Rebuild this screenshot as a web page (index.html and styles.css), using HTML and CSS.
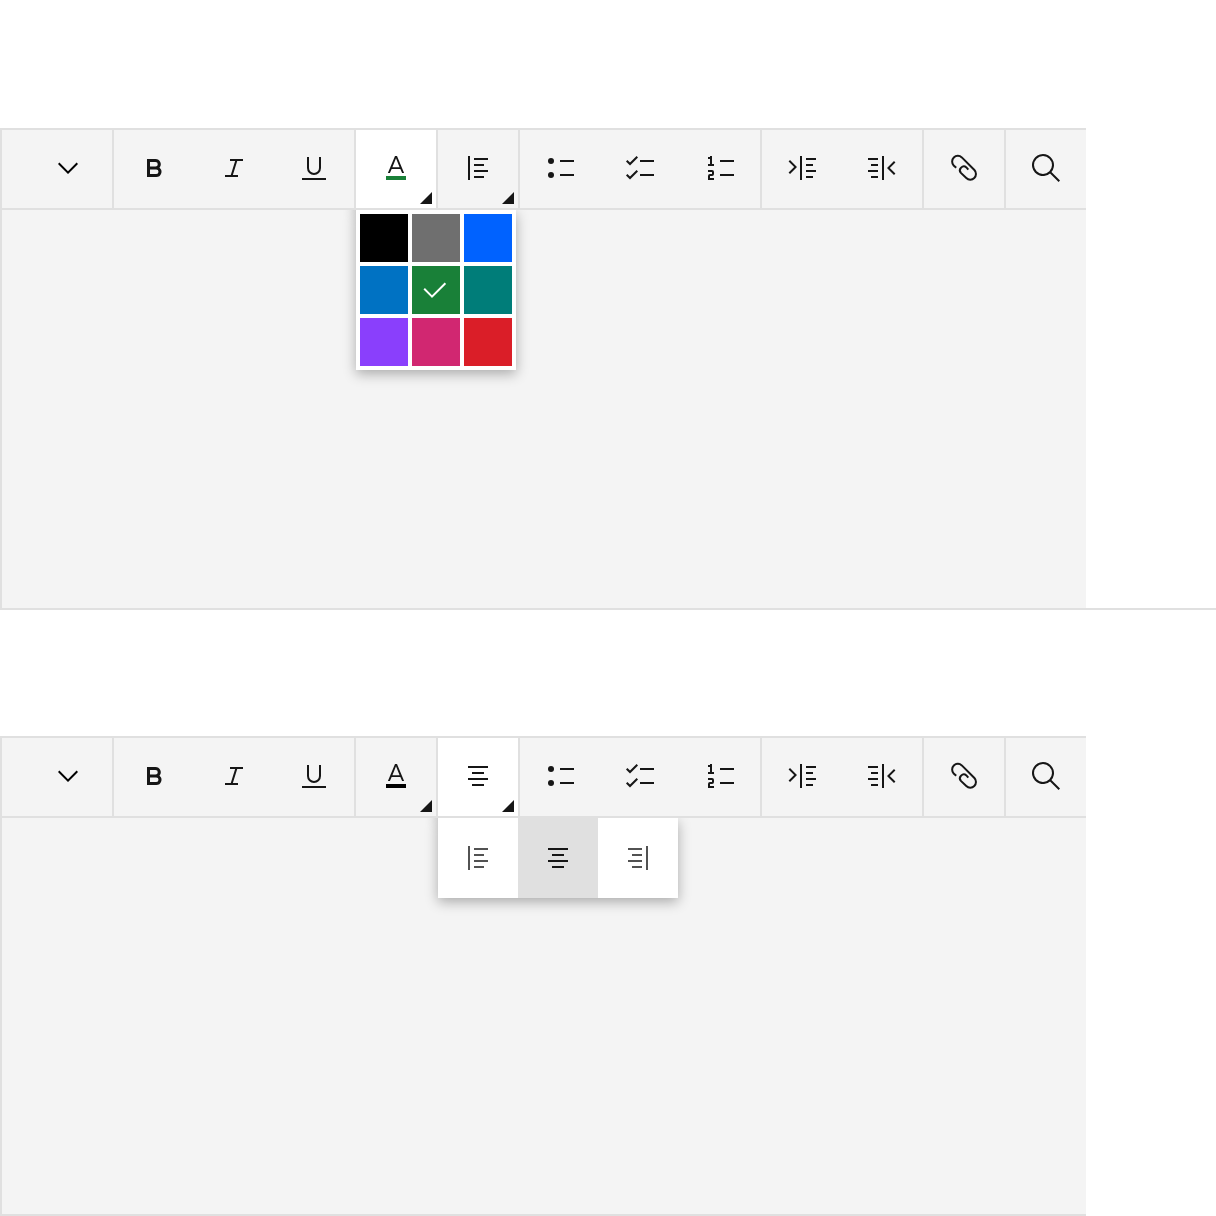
FILE: index.html
```html
<!DOCTYPE html>
<html lang="en">
<head>
<meta charset="utf-8">
<title>Text toolbar</title>
<link rel="stylesheet" href="styles.css">
</head>
<body>
<svg class="defs" aria-hidden="true">
  <symbol id="chevron" viewBox="0 0 32 32"><path d="M16 22 6 12l1.4-1.4 8.6 8.6 8.6-8.6L26 12z"/></symbol>
  <symbol id="bold" viewBox="0 0 32 32"><path d="M18.25 25H9V7h8.5a5.25 5.25 0 0 1 4 8.65A5.25 5.25 0 0 1 18.25 25zM12 22h6.23a2.25 2.25 0 1 0 0-4.5H12zm0-7.5h5.5a2.25 2.25 0 1 0 0-4.5H12z"/></symbol>
  <symbol id="italic" viewBox="0 0 32 32"><path d="M25 9V7H12v2h5.14l-4.37 14H7v2h13v-2h-5.14l4.37-14z"/></symbol>
  <symbol id="underline" viewBox="0 0 32 32"><path d="M4 26h24v2H4zM16 23a7 7 0 0 1-7-7V5h2v11a5 5 0 0 0 10 0V5h2v11a7 7 0 0 1-7 7z"/></symbol>
  <symbol id="letter" viewBox="0 0 32 32"><path d="M22.1 21h2L17 4h-2L7.9 21h2l1.75-4.1h8.7zM12.4 15.2 16 6.3l3.6 8.9z"/></symbol>
  <symbol id="left" viewBox="0 0 32 32"><path d="M6 4h2v24H6zM12 6h14v2H12zM12 12h10v2H12zM12 18h14v2H12zM12 24h10v2H12z"/></symbol>
  <symbol id="center" viewBox="0 0 32 32"><path d="M6 6h20v2H6zM10 12h12v2H10zM6 18h20v2H6zM10 24h12v2H10z"/></symbol>
  <symbol id="right" viewBox="0 0 32 32"><path d="M24 4h2v24h-2zM6 6h14v2H6zM10 12h10v2H10zM6 18h14v2H6zM10 24h10v2H10z"/></symbol>
  <symbol id="bullets" viewBox="0 0 32 32"><circle cx="7" cy="9" r="3"/><circle cx="7" cy="23" r="3"/><path d="M16 8h14v2H16zM16 22h14v2H16z"/></symbol>
  <symbol id="checks" viewBox="0 0 32 32"><path d="M16 8h14v2H16zM16 22h14v2H16zM6 10.59 3.41 8 2 9.41l4 4 8-8L12.59 4zM6 24.59 3.41 22 2 23.41l4 4 8-8L12.59 18z"/></symbol>
  <symbol id="numbers" viewBox="0 0 32 32"><path d="M16 22h14v2H16zM16 8h14v2H16zM8 12V4H6v1H4v2h2v5H4v2h6v-2zM10 28H4v-4a2 2 0 0 1 2-2h2v-2H4v-2h4a2 2 0 0 1 2 2v2a2 2 0 0 1-2 2H6v2h4z"/></symbol>
  <symbol id="indent" viewBox="0 0 32 32"><path d="M20 6h10v2H20zM20 12h7v2h-7zM20 18h10v2H20zM20 24h7v2h-7zM14 4h2v24h-2zM4 22l-1.41-1.41L8.17 15 2.59 9.41 4 8l7 7z"/></symbol>
  <symbol id="outdent" viewBox="0 0 32 32"><path d="M2 6h10v2H2zM5 12h7v2H5zM2 18h10v2H2zM5 24h7v2H5zM16 4h2v24h-2zM28 23l1.41-1.41L23.83 16l5.58-5.59L28 9l-7 7z"/></symbol>
  <symbol id="clip" viewBox="0 0 32 32"><path class="line" d="M8.2 15.8 5.7 13.5A5.73 5.73 0 0 1 13.8 5.4L26.4 18A5.73 5.73 0 0 1 18.3 26.1L12.9 20.9A3.9 3.9 0 0 1 18.4 15.4L20.3 17.6"/></symbol>
  <symbol id="search" viewBox="0 0 32 32"><path d="m30 28.59-8.55-8.55a11 11 0 1 0-1.41 1.41L28.59 30zM4 13a9 9 0 1 1 9 9 9 9 0 0 1-9-9z"/></symbol>
  <symbol id="tick" viewBox="0 0 32 32"><path d="m12 21.2-7.1-7.1-1.4 1.4 7.1 7.1L12 24 26.1 9.9l-1.4-1.5z"/></symbol>
</svg>

<section class="example example-full">
  <div class="editor">
    <div class="toolbar">
      <div class="group select"><svg class="icon black"><use href="#chevron"/></svg></div>
      <div class="group">
        <div class="tool"><svg class="icon"><use href="#bold"/></svg></div>
        <div class="tool"><svg class="icon"><use href="#italic"/></svg></div>
        <div class="tool"><svg class="icon"><use href="#underline"/></svg></div>
      </div>
      <div class="group">
        <div class="tool open more">
          <svg class="icon" viewBox="0 0 32 32"><use href="#letter"/><path class="green" d="M6 24h20v4H6z"/></svg>
          <div class="menu swatches">
            <span class="swatch c-black"></span><span class="swatch c-gray"></span><span class="swatch c-blue"></span>
            <span class="swatch c-cyan"></span><span class="swatch c-green"><svg class="icon white"><use href="#tick"/></svg></span><span class="swatch c-teal"></span>
            <span class="swatch c-purple"></span><span class="swatch c-magenta"></span><span class="swatch c-red"></span>
          </div>
        </div>
      </div>
      <div class="group"><div class="tool more"><svg class="icon"><use href="#left"/></svg></div></div>
      <div class="group">
        <div class="tool"><svg class="icon"><use href="#bullets"/></svg></div>
        <div class="tool"><svg class="icon"><use href="#checks"/></svg></div>
        <div class="tool"><svg class="icon"><use href="#numbers"/></svg></div>
      </div>
      <div class="group">
        <div class="tool"><svg class="icon"><use href="#indent"/></svg></div>
        <div class="tool"><svg class="icon"><use href="#outdent"/></svg></div>
      </div>
      <div class="group"><div class="tool"><svg class="icon"><use href="#clip"/></svg></div></div>
      <div class="group"><div class="tool"><svg class="icon"><use href="#search"/></svg></div></div>
    </div>
    <div class="page"></div>
  </div>
</section>

<section class="example example-next">
  <div class="editor editor-end">
    <div class="toolbar">
      <div class="group select"><svg class="icon black"><use href="#chevron"/></svg></div>
      <div class="group">
        <div class="tool"><svg class="icon"><use href="#bold"/></svg></div>
        <div class="tool"><svg class="icon"><use href="#italic"/></svg></div>
        <div class="tool"><svg class="icon"><use href="#underline"/></svg></div>
      </div>
      <div class="group">
        <div class="tool more"><svg class="icon" viewBox="0 0 32 32"><use href="#letter"/><path class="black" d="M6 24h20v4H6z"/></svg></div>
      </div>
      <div class="group">
        <div class="tool open more">
          <svg class="icon"><use href="#center"/></svg>
          <div class="menu aligns">
            <span class="align"><svg class="icon"><use href="#left"/></svg></span>
            <span class="align selected"><svg class="icon"><use href="#center"/></svg></span>
            <span class="align"><svg class="icon"><use href="#right"/></svg></span>
          </div>
        </div>
      </div>
      <div class="group">
        <div class="tool"><svg class="icon"><use href="#bullets"/></svg></div>
        <div class="tool"><svg class="icon"><use href="#checks"/></svg></div>
        <div class="tool"><svg class="icon"><use href="#numbers"/></svg></div>
      </div>
      <div class="group">
        <div class="tool"><svg class="icon"><use href="#indent"/></svg></div>
        <div class="tool"><svg class="icon"><use href="#outdent"/></svg></div>
      </div>
      <div class="group"><div class="tool"><svg class="icon"><use href="#clip"/></svg></div></div>
      <div class="group"><div class="tool"><svg class="icon"><use href="#search"/></svg></div></div>
    </div>
    <div class="page"></div>
  </div>
</section>
</body>
</html>
```
FILE: styles.css
```css
* { box-sizing: border-box; }
body { margin: 0; background: #fff; font-family: "Liberation Sans", sans-serif; }
.defs { display: none; }

.example { padding-top: 128px; }
.example-next { padding-top: 126px; }
.example-full { border-bottom: 2px solid #e0e0e0; }
.editor { width: 1086px; background: #f4f4f4; }
.editor-end { border-bottom: 2px solid #e0e0e0; }

.toolbar {
  display: flex;
  height: 82px;
  border-top: 2px solid #e0e0e0;
  border-bottom: 2px solid #e0e0e0;
}
.group { display: flex; border-left: 2px solid #e0e0e0; }
.select { width: 112px; padding: 22px 0 0 50px; }
.tool { position: relative; width: 80px; padding: 22px 24px 0; }
.open { background: #fff; }
.more::after {
  content: "";
  position: absolute;
  right: 4px;
  bottom: 4px;
  width: 12px;
  height: 12px;
  background: #161616;
  clip-path: polygon(100% 0, 100% 100%, 0 100%);
}
.page { height: 398px; border-left: 2px solid #e0e0e0; }
.editor-end .page { height: 396px; }

.icon { display: block; width: 32px; height: 32px; fill: #161616; }
.line { fill: none; stroke: #161616; stroke-width: 2; }
.black { fill: #000; }
.white { fill: #fff; }
.green { fill: #198038; }

/* The menu sits under the toolbar's rule, so its shadow is cut at the top. */
.menu {
  position: absolute;
  top: 80px;
  left: 0;
  clip-path: inset(0 -24px -24px -24px);
}
.menu::before,
.menu::after {
  content: "";
  position: absolute;
  z-index: -1;
  box-shadow: 0 4px 12px rgba(0, 0, 0, 0.3);
}
.menu::before { left: 0; top: -80px; width: 80px; height: 80px; }
.menu::after { inset: 0; background: #fff; }

.swatches { display: grid; grid-template-columns: repeat(3, 48px); gap: 4px; padding: 4px; }
.swatch { height: 48px; padding: 8px; }
.c-black { background: #000; }
.c-gray { background: #6f6f6f; }
.c-blue { background: #0062ff; }
.c-cyan { background: #0072c3; }
.c-green { background: #198038; }
.c-teal { background: #007d79; }
.c-purple { background: #8a3ffc; }
.c-magenta { background: #d12771; }
.c-red { background: #da1e28; }

.aligns { display: flex; }
.align { width: 80px; height: 80px; padding: 24px; }
.align .icon { fill: #525252; }
.selected { background: #e0e0e0; }
.selected .icon { fill: #161616; }
```
